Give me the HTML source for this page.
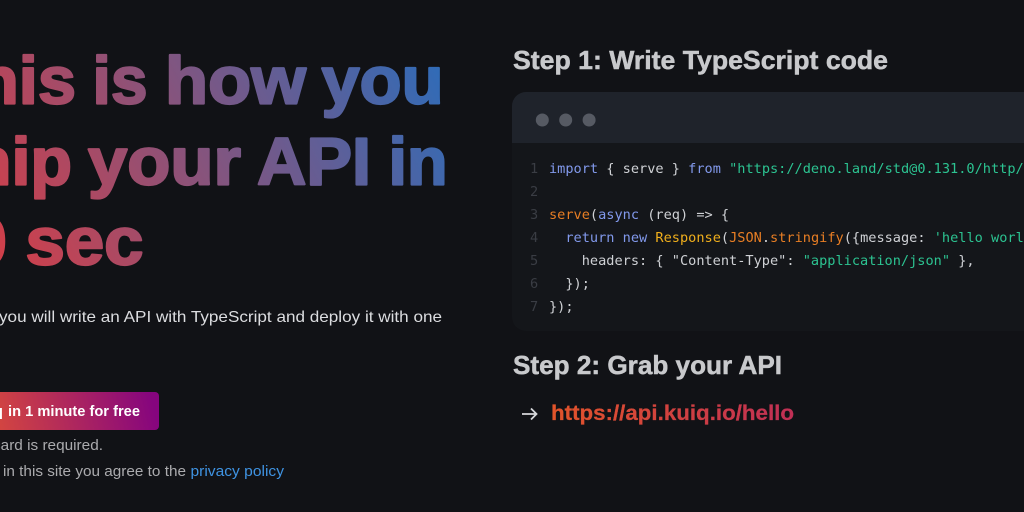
<!DOCTYPE html>
<html><head><meta charset="utf-8">
<style>
html,body{margin:0;padding:0;width:1024px;height:512px;overflow:hidden;background:#111216}
svg.main{position:absolute;left:0;top:0}
text{font-family:"Liberation Sans",sans-serif}
.h{font-size:67px;font-weight:700;fill:url(#hg);stroke:url(#hg);stroke-width:2.2;stroke-linejoin:round}
.st{font-size:26px;font-weight:700;fill:#c8c9cc;stroke:#c8c9cc;stroke-width:.5}
#code{position:absolute;left:512px;top:143px;width:512px;height:188px;overflow:hidden;font:13.6px/23.1px "DejaVu Sans Mono",monospace;color:#cfd1d5;white-space:pre;margin:0}
#code div{position:absolute;left:37px;white-space:pre}
#code i{font-style:normal;position:absolute;left:-19px;color:#3a3d44}
.k{color:#8299ec}.s{color:#2cc391}.o{color:#e87e24}.y{color:#efae1c}
</style></head>
<body>
<svg class="main" width="1024" height="512" viewBox="0 0 1024 512" xmlns="http://www.w3.org/2000/svg">
<defs>
<linearGradient id="hg" gradientUnits="userSpaceOnUse" x1="-20" y1="290" x2="450" y2="50">
<stop offset="0" stop-color="#dc3c42"/><stop offset="1" stop-color="#2b6dbb"/>
</linearGradient>
<linearGradient id="btn" gradientUnits="userSpaceOnUse" x1="-5" y1="430" x2="150" y2="392">
<stop offset="0" stop-color="#d5473f"/><stop offset="1" stop-color="#86057e"/>
</linearGradient>
<linearGradient id="lnk" gradientUnits="userSpaceOnUse" x1="551" y1="0" x2="794" y2="0">
<stop offset="0" stop-color="#e2542a"/><stop offset="1" stop-color="#c02f55"/>
</linearGradient>
</defs>
<text class="h" x="-65" y="103.500" textLength="141" lengthAdjust="spacingAndGlyphs">This</text>
<text class="h" x="92.500" y="103.500" textLength="55" lengthAdjust="spacingAndGlyphs">is</text>
<text class="h" x="165" y="103.500" textLength="141" lengthAdjust="spacingAndGlyphs">how</text>
<text class="h" x="321.500" y="103.500" textLength="122" lengthAdjust="spacingAndGlyphs">you</text>
<text class="h" x="-68" y="184.500" textLength="140" lengthAdjust="spacingAndGlyphs">ship</text>
<text class="h" x="88" y="184.500" textLength="153" lengthAdjust="spacingAndGlyphs">your</text>
<text class="h" x="257" y="184.500" textLength="114" lengthAdjust="spacingAndGlyphs">API</text>
<text class="h" x="388.500" y="184.500" textLength="59" lengthAdjust="spacingAndGlyphs">in</text>
<text class="h" x="-72" y="264.500" textLength="79" lengthAdjust="spacingAndGlyphs">60</text>
<text class="h" x="25.500" y="264.500" textLength="118" lengthAdjust="spacingAndGlyphs">sec</text>
<text x="-1" y="322" font-size="16" fill="#dcdde0" textLength="443" lengthAdjust="spacingAndGlyphs">you will write an API with TypeScript and deploy it with one</text>
<path d="M-10 392H155a4 4 0 0 1 4 4v30a4 4 0 0 1-4 4H-10z" fill="url(#btn)"/>
<text x="-34" y="416" font-size="14.5" font-weight="700" fill="#fff" textLength="37" lengthAdjust="spacingAndGlyphs">Kuiq</text>
<text x="8" y="416" font-size="14.5" font-weight="700" fill="#fff" textLength="132" lengthAdjust="spacingAndGlyphs">in 1 minute for free</text>
<text x="-7" y="450" font-size="14.5" fill="#ababae" textLength="110" lengthAdjust="spacingAndGlyphs">card is required.</text>
<text x="3" y="476" font-size="14.5" fill="#ababae" textLength="183" lengthAdjust="spacingAndGlyphs">in this site you agree to the</text>
<text x="190.500" y="476" font-size="14.5" fill="#3f93e2" textLength="93.500" lengthAdjust="spacingAndGlyphs">privacy policy</text>
<text class="st" x="513" y="69" textLength="375" lengthAdjust="spacingAndGlyphs">Step 1: Write TypeScript code</text>
<rect x="512" y="92" width="600" height="239" rx="14" fill="#14161a"/>
<path d="M512 143V106a14 14 0 0 1 14-14H1024V143z" fill="#1f232b"/>
<circle cx="542.300" cy="120" r="6.500" fill="#565a63"/>
<circle cx="565.700" cy="120" r="6.500" fill="#565a63"/>
<circle cx="589.100" cy="120" r="6.500" fill="#565a63"/>
<text class="st" x="513" y="374" textLength="269" lengthAdjust="spacingAndGlyphs">Step 2: Grab your API</text>
<path d="M522 414H536M531 408.500L536.500 414L531 419.500" fill="none" stroke="#d6d7da" stroke-width="1.800"/>
<text x="551" y="420" font-size="21.500" font-weight="700" fill="url(#lnk)" stroke="url(#lnk)" stroke-width=".25" textLength="243" lengthAdjust="spacingAndGlyphs">https://api.kuiq.io/hello</text>
</svg>
<div id="code">
<div style="top:14.500px"><i>1</i><span class="k">import</span> { serve } <span class="k">from</span> <span class="s">"https://deno.land/std@0.131.0/http/server.ts"</span>;</div>
<div style="top:37.600px"><i>2</i></div>
<div style="top:60.700px"><i>3</i><span class="o">serve</span>(<span class="k">async</span> (req) =&gt; {</div>
<div style="top:83.800px"><i>4</i>  <span class="k">return</span> <span class="k">new</span> <span class="y">Response</span>(<span class="o">JSON</span>.<span class="o">stringify</span>({message: <span class="s">'hello world'</span>}), {</div>
<div style="top:106.900px"><i>5</i>    headers: { "Content-Type": <span class="s">"application/json"</span> },</div>
<div style="top:130px"><i>6</i>  });</div>
<div style="top:153.100px"><i>7</i>});</div>
</div>
</body></html>
